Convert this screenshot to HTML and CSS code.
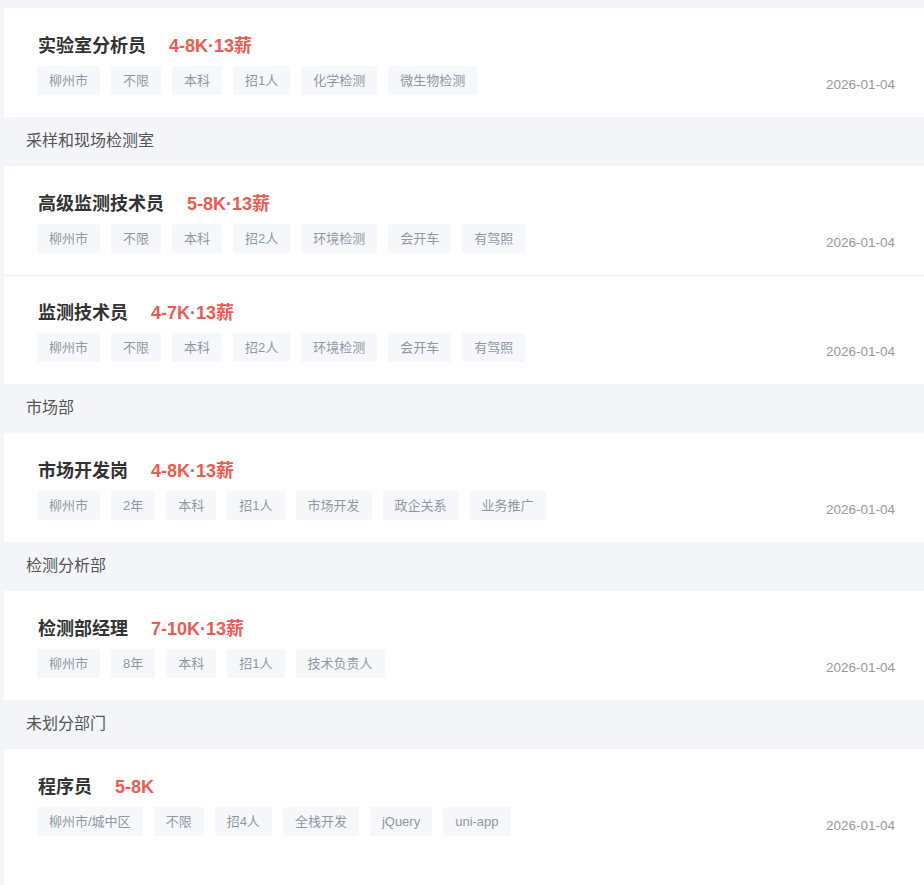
FILE: index.html
```html
<!DOCTYPE html>
<html lang="zh-CN">
<head>
<meta charset="utf-8">
<title>职位列表</title>
<link rel="stylesheet" href="styles.css">
</head>
<body>
<div class="page">
  <div class="card">
    <div class="main">
      <div class="head"><span class="title">实验室分析员</span><span class="salary">4-8K·13薪</span></div>
      <div class="tags"><span class="tag">柳州市</span><span class="tag">不限</span><span class="tag">本科</span><span class="tag">招1人</span><span class="tag">化学检测</span><span class="tag">微生物检测</span></div>
    </div>
    <div class="date">2026-01-04</div>
  </div>

  <div class="section">采样和现场检测室</div>
  <div class="card">
    <div class="main">
      <div class="head"><span class="title">高级监测技术员</span><span class="salary">5-8K·13薪</span></div>
      <div class="tags"><span class="tag">柳州市</span><span class="tag">不限</span><span class="tag">本科</span><span class="tag">招2人</span><span class="tag">环境检测</span><span class="tag">会开车</span><span class="tag">有驾照</span></div>
    </div>
    <div class="date">2026-01-04</div>
  </div>
  <div class="card">
    <div class="main">
      <div class="head"><span class="title">监测技术员</span><span class="salary">4-7K·13薪</span></div>
      <div class="tags"><span class="tag">柳州市</span><span class="tag">不限</span><span class="tag">本科</span><span class="tag">招2人</span><span class="tag">环境检测</span><span class="tag">会开车</span><span class="tag">有驾照</span></div>
    </div>
    <div class="date">2026-01-04</div>
  </div>

  <div class="section">市场部</div>
  <div class="card">
    <div class="main">
      <div class="head"><span class="title">市场开发岗</span><span class="salary">4-8K·13薪</span></div>
      <div class="tags"><span class="tag">柳州市</span><span class="tag">2年</span><span class="tag">本科</span><span class="tag">招1人</span><span class="tag">市场开发</span><span class="tag">政企关系</span><span class="tag">业务推广</span></div>
    </div>
    <div class="date">2026-01-04</div>
  </div>

  <div class="section">检测分析部</div>
  <div class="card">
    <div class="main">
      <div class="head"><span class="title">检测部经理</span><span class="salary">7-10K·13薪</span></div>
      <div class="tags"><span class="tag">柳州市</span><span class="tag">8年</span><span class="tag">本科</span><span class="tag">招1人</span><span class="tag">技术负责人</span></div>
    </div>
    <div class="date">2026-01-04</div>
  </div>

  <div class="section">未划分部门</div>
  <div class="card last">
    <div class="main">
      <div class="head"><span class="title">程序员</span><span class="salary">5-8K</span></div>
      <div class="tags"><span class="tag">柳州市/城中区</span><span class="tag">不限</span><span class="tag">招4人</span><span class="tag">全栈开发</span><span class="tag">jQuery</span><span class="tag">uni-app</span></div>
    </div>
    <div class="date">2026-01-04</div>
  </div>
</div>
</body>
</html>
```

FILE: styles.css
```css
html, body {
  margin: 0;
  padding: 0;
  background: #f3f5f8;
  font-family: "Liberation Sans", "Noto Sans CJK SC", sans-serif;
}

.page {
  padding-top: 8px;
}

.card {
  margin-left: 4px;
  background: #ffffff;
  display: flex;
  justify-content: space-between;
  padding: 25px 29px 22px 33px;
}

.card + .card {
  border-top: 1px solid #eeeeee;
  padding-top: 24px;
}

.card.last {
  padding-bottom: 50px;
}

.main {
  display: flex;
  flex-direction: column;
  gap: 7px;
}

.head {
  display: flex;
  align-items: center;
  gap: 23px;
  height: 26px;
  padding-left: 1px;
}

.title {
  font-size: 18px;
  line-height: 26px;
  font-weight: 700;
  color: #333333;
}

.salary {
  font-size: 18px;
  line-height: 26px;
  font-weight: 700;
  color: #ef5a50;
}

.tags {
  display: flex;
  gap: 11px;
}

.tag {
  height: 29px;
  line-height: 29px;
  padding: 0 12px;
  font-size: 13px;
  color: #8f97a3;
  background: #f5f7fa;
  border-radius: 2px;
}

.date {
  align-self: flex-end;
  font-size: 13.5px;
  line-height: 18px;
  color: #999999;
  margin-bottom: 1px;
}

.section {
  height: 49px;
  line-height: 48px;
  padding-left: 26px;
  font-size: 16px;
  color: #555555;
}
```
